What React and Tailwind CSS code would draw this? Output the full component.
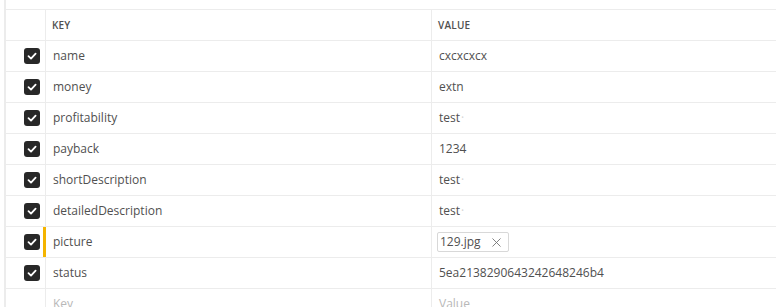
import { X } from 'lucide-react'

const rows = [
  { key: 'name', value: 'cxcxcxcx' },
  { key: 'money', value: 'extn' },
  { key: 'profitability', value: 'test', dot: true },
  { key: 'payback', value: '1234' },
  { key: 'shortDescription', value: 'test', dot: true },
  { key: 'detailedDescription', value: 'test', dot: true },
  { key: 'picture', file: '129.jpg', active: true },
  { key: 'status', value: '5ea2138290643242648246b4' },
]

const Check = () => (
  <div className='w-4 h-4 rounded-[3px] bg-[#282828] flex items-center justify-center'>
    <svg width='10' height='10' viewBox='0 0 10 10'>
      <path d='M1.5 5.2 L4 7.6 L8.6 2.6' fill='none' stroke='white' strokeWidth='1.8' strokeLinecap='round' strokeLinejoin='round' />
    </svg>
  </div>
)

const App = () => {
  return (
    <div className='w-[776px] h-[307px] overflow-hidden bg-white font-["Open_Sans",sans-serif] text-[#505050]'>
      <div className='ml-1 h-full border-l-2 border-[#ececec] pt-[9px]'>
        <div className='border-t border-[#ececec]'>
          <div className='flex h-[31px] border-b border-[#ececec]'>
            <div className='w-[40px] border-r border-[#ececec]' />
            <div className='w-[386px] border-r border-[#ececec] flex items-center pl-[6px] text-[10px] font-semibold tracking-[0.2px] text-[#505050]'>KEY</div>
            <div className='flex-1 flex items-center pl-[6px] text-[10px] font-semibold tracking-[0.2px]'>VALUE</div>
          </div>
          {rows.map((r) => (
            <div key={r.key} className='flex h-[31px] border-b border-[#ececec] text-[12px]'>
              <div className={`w-[40px] flex items-center justify-end pr-[3px] ${r.active ? 'border-r-[3px] border-[#f4b400]' : 'border-r border-[#ececec] pr-[5px]'}`}>
                <Check />
              </div>
              <div className='w-[386px] border-r border-[#ececec] flex items-center pl-[7px]'>{r.key}</div>
              <div className='flex-1 flex items-center pl-[7px]'>
                {r.file ? (
                  <div className='flex items-center gap-[8px] h-[20px] border border-[#d8d8d8] rounded-[2px] pl-[2px] pr-[4px] -ml-[2px]'>
                    <span>{r.file}</span>
                    <X size={15} strokeWidth={1.4} className='text-[#707070]' />
                  </div>
                ) : (
                  <span>{r.value}{r.dot && <span className='text-[#d4d4d4] ml-[1px]'>·</span>}</span>
                )}
              </div>
            </div>
          ))}
          <div className='flex h-[31px] text-[12px] text-[#b8b8b8]'>
            <div className='w-[40px] border-r border-[#ececec]' />
            <div className='w-[386px] border-r border-[#ececec] pl-[7px] pt-[6px]'>Key</div>
            <div className='flex-1 pl-[7px] pt-[6px]'>Value</div>
          </div>
        </div>
      </div>
    </div>
  )
}

export default App
